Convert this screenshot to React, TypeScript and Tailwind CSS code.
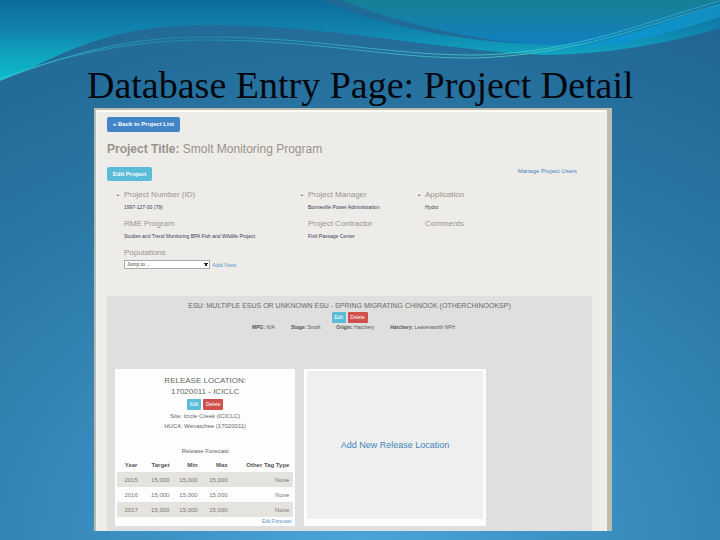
import type { ReactNode } from "react";

const forecast = [
    { year: "2015", target: "15,000", min: "15,000", max: "15,000", tag: "None" },
    { year: "2016", target: "15,000", min: "15,000", max: "15,000", tag: "None" },
    { year: "2017", target: "15,000", min: "15,000", max: "15,000", tag: "None" },
];

function Waves() {
    return (
        <svg
            aria-hidden="true"
            viewBox="0 0 720 90"
            preserveAspectRatio="none"
            className="absolute inset-x-0 top-0 h-[90px] w-full"
        >
            <defs>
                <linearGradient id="sea" gradientUnits="userSpaceOnUse" x1="0" y1="0" x2="0" y2="76">
                    <stop offset="0" stopColor="#0b6b9d" />
                    <stop offset="0.4" stopColor="#1083ad" />
                    <stop offset="0.7" stopColor="#10a2c0" />
                    <stop offset="1" stopColor="#0cb7c9" />
                </linearGradient>
                <linearGradient id="bowl" x1="0" y1="0" x2="0" y2="1">
                    <stop offset="0" stopColor="#158095" />
                    <stop offset="0.5" stopColor="#1580ab" />
                    <stop offset="1" stopColor="#127fc0" />
                </linearGradient>
                <linearGradient id="edge" x1="0" y1="0" x2="1" y2="0">
                    <stop offset="0" stopColor="#0c9cd0" stopOpacity="0" />
                    <stop offset="0.35" stopColor="#0c94d0" />
                    <stop offset="1" stopColor="#128fc0" />
                </linearGradient>
                <linearGradient id="line" x1="0" y1="0" x2="1" y2="0">
                    <stop offset="0" stopColor="#35c6cf" />
                    <stop offset="0.25" stopColor="#1d8fb8" />
                    <stop offset="0.45" stopColor="#2fb0c6" />
                    <stop offset="0.7" stopColor="#55d3c8" />
                    <stop offset="0.85" stopColor="#2fc0cf" />
                    <stop offset="1" stopColor="#37a5c8" />
                </linearGradient>
            </defs>
            <path d="M0 0H720V28C665 44 610 54 545 55C440 51 330 24 200 25C95 27 60 58 0 81Z" fill="url(#sea)" />
            <path d="M322 0C365 20 430 36 510 43L540 44C470 34 390 17 346 0Z" fill="#1f6b98" />
            <path d="M342 0C385 18 440 32 500 41C535 45 560 46 590 43C640 33 680 15 720 2V0Z" fill="url(#bowl)" />
            <path d="M560 51C620 40 670 20 720 4V17C670 33 625 46 560 51Z" fill="url(#edge)" />
            <path d="M0 80C75 52 130 37 205 37C320 37 390 56 480 55C580 52 650 20 720 1" fill="none" stroke="url(#line)" strokeWidth="0.8" />
            <path d="M0 79C60 56 130 40 205 40C320 40 390 59 475 58C575 55 650 24 720 4" fill="none" stroke="url(#line)" strokeWidth="0.8" />
        </svg>
    );
}

function Detail({ label, children }: { label: string; children?: ReactNode }) {
    return (
        <div className="h-[29px]">
            <dt className="text-[8px] leading-3 text-[#9a948b]">{label}</dt>
            <dd className="text-[5px] leading-3 text-[#3b3a55]">{children}</dd>
        </div>
    );
}

function EditButtons() {
    return (
        <div className="flex justify-center gap-[2px] text-[5px] leading-[11px] text-white">
            <button type="button" className="h-[11px] w-[14px] rounded-[1px] bg-[#5bbcd9]">
                Edit
            </button>
            <button type="button" className="h-[11px] w-5 rounded-[1px] bg-[#d2504c]">
                Delete
            </button>
        </div>
    );
}

export default function App() {
    return (
        <div className="relative min-h-screen bg-[radial-gradient(ellipse_110%_110%_at_50%_100%,#4ba4d8_0%,#3b8fc1_30%,#2a77a5_65%,#1f6591_100%)] pb-[9px] font-['Liberation_Sans',sans-serif]">
            <Waves />
            <header className="relative pt-[62px] pl-[87px]">
                <h1 className="h-[46px] text-[38px] leading-[46px] whitespace-nowrap text-[#04060f] font-['Liberation_Serif',serif]">
                    Database Entry Page: Project Detail
                </h1>
            </header>

            <main className="relative mr-[108px] ml-[94px] border-t-2 border-r-[5px] border-l-2 border-[#bcbcae] bg-[#edece8]">
                <div className="border-x-2 border-t-2 border-x-[#f3f2ee] border-t-[#fafaf8] pt-[5px] pr-[13px] pl-[9px]">
                    <button
                        type="button"
                        className="block h-[15px] w-[73px] rounded-[2px] bg-[#4285c6] text-[6px] leading-[15px] font-bold whitespace-nowrap text-white"
                    >
                        « Back to Project List
                    </button>
                    <h2 className="mt-[9px] text-[12px] leading-4 text-[#99938a]">
                        <strong>Project Title:</strong> Smolt Monitoring Program
                    </h2>
                    <div className="mt-[10px] flex items-start justify-between pr-[15px]">
                        <button
                            type="button"
                            className="h-[14px] w-[45px] rounded-[2px] bg-[#5bbcd9] text-[6px] leading-[14px] font-bold text-white"
                        >
                            Edit Project
                        </button>
                        <a href="#users" className="text-[6px] leading-2 text-[#4684c0]">
                            Manage Project Users
                        </a>
                    </div>

                    <ul className="mt-2 grid h-[107px] grid-cols-[184fr_117fr_174fr] pl-[10px] text-[6px]">
                        <li className="flex">
                            <span aria-hidden="true" className="w-[7px] shrink-0 leading-[13px] text-[#555]">•</span>
                            <dl>
                                <Detail label="Project Number (ID)">1997-127-00 (79)</Detail>
                                <Detail label="RME Program">
                                    Studies and Trend Monitoring BPA Fish and Wildlife Project
                                </Detail>
                                <dt className="text-[8px] leading-3 text-[#9a948b]">
                                    <label htmlFor="population">Populations</label>
                                </dt>
                                <dd className="mt-px flex items-center gap-[2px]">
                                    <select
                                        id="population"
                                        className="h-[9px] w-[86px] appearance-none border border-[#aaa] bg-white bg-[linear-gradient(to_bottom_left,#222_50%,transparent_50%),linear-gradient(to_bottom_right,#222_50%,transparent_50%)] bg-[size:2px_4px] bg-[position:79px_2px,81px_2px] bg-no-repeat pl-[2px] text-[5px] leading-[7px] text-[#444]"
                                    >
                                        <option>Jump to ...</option>
                                    </select>
                                    <a href="#new-population" className="text-[6px] leading-2 text-[#5b9ccb]">
                                        Add New
                                    </a>
                                </dd>
                            </dl>
                        </li>
                        <li className="flex">
                            <span aria-hidden="true" className="w-[7px] shrink-0 leading-[13px] text-[#555]">•</span>
                            <dl>
                                <Detail label="Project Manager">Bonneville Power Administration</Detail>
                                <Detail label="Project Contractor">Fish Passage Center</Detail>
                            </dl>
                        </li>
                        <li className="flex">
                            <span aria-hidden="true" className="w-[7px] shrink-0 leading-[13px] text-[#555]">•</span>
                            <dl>
                                <Detail label="Application">Hydro</Detail>
                                <Detail label="Comments" />
                            </dl>
                        </li>
                    </ul>

                    <section className="bg-[#dfdfdf] px-2 pt-1 pb-[5px]">
                        <h3 className="pb-px text-center text-[7px] leading-[11px] text-[#6e6862]">
                            ESU: MULTIPLE ESUS OR UNKNOWN ESU - SPRING MIGRATING CHINOOK (OTHERCHINOOKSP)
                        </h3>
                        <EditButtons />
                        <div className="flex h-[46px] justify-center gap-4 pl-2 text-[5px] leading-2 text-[#555]">
                            <span><b>MPG:</b> N/A</span>
                            <span><b>Stage:</b> Smolt</span>
                            <span><b>Origin:</b> Hatchery</span>
                            <span><b>Hatchery:</b> Leavenworth NFH</span>
                        </div>

                        <div className="grid grid-cols-[180fr_181fr_89fr] gap-x-[9px]">
                            <article className="bg-[#fdfdfd] px-[2px] pt-[6px] pb-px text-center text-[#666]">
                                <h4 className="text-[8px] leading-[11px]">
                                    RELEASE LOCATION:
                                    <br />
                                    17020011 - ICICLC
                                </h4>
                                <div className="pt-[2px] pb-px">
                                    <EditButtons />
                                </div>
                                <p className="h-[34px] text-[6px] leading-[10px]">
                                    Site: Icicle Creek (ICICLC)
                                    <br />
                                    HUC4: Wenatchee (17020011)
                                </p>
                                <table className="w-full table-fixed text-[6px] leading-[10px] text-[#777]">
                                    <caption className="h-[13px] leading-3 text-[#666]">Release Forecast</caption>
                                    <colgroup>
                                        <col className="w-[16%]" />
                                        <col className="w-[16%]" />
                                        <col className="w-[16%]" />
                                        <col className="w-[17%]" />
                                        <col />
                                    </colgroup>
                                    <thead>
                                        <tr className="h-[14px] text-right text-[#555]">
                                            <th className="text-center">Year</th>
                                            <th className="pr-1">Target</th>
                                            <th className="pr-1">Min</th>
                                            <th className="pr-1">Max</th>
                                            <th className="pr-1">Other Tag Type</th>
                                        </tr>
                                    </thead>
                                    <tbody>
                                        {forecast.map((row) => (
                                            <tr key={row.year} className="h-[15px] text-right odd:bg-[#e5e3de]">
                                                <td className="text-center">{row.year}</td>
                                                <td className="pr-1">{row.target}</td>
                                                <td className="pr-1">{row.min}</td>
                                                <td className="pr-1">{row.max}</td>
                                                <td className="pr-1">{row.tag}</td>
                                            </tr>
                                        ))}
                                    </tbody>
                                </table>
                                <a href="#forecast" className="block pr-[2px] text-right text-[5px] leading-2 text-[#5b95c9]">
                                    Edit Forecast
                                </a>
                            </article>

                            <div className="flex bg-[#fdfdfd] px-[3px] pt-[2px] pb-[7px]">
                                <a
                                    href="#new-location"
                                    className="flex flex-1 items-center justify-center bg-[#efefef] text-[9px] leading-3 text-[#4684b8]"
                                >
                                    Add New Release Location
                                </a>
                            </div>
                        </div>
                    </section>
                </div>
            </main>
        </div>
    );
}
